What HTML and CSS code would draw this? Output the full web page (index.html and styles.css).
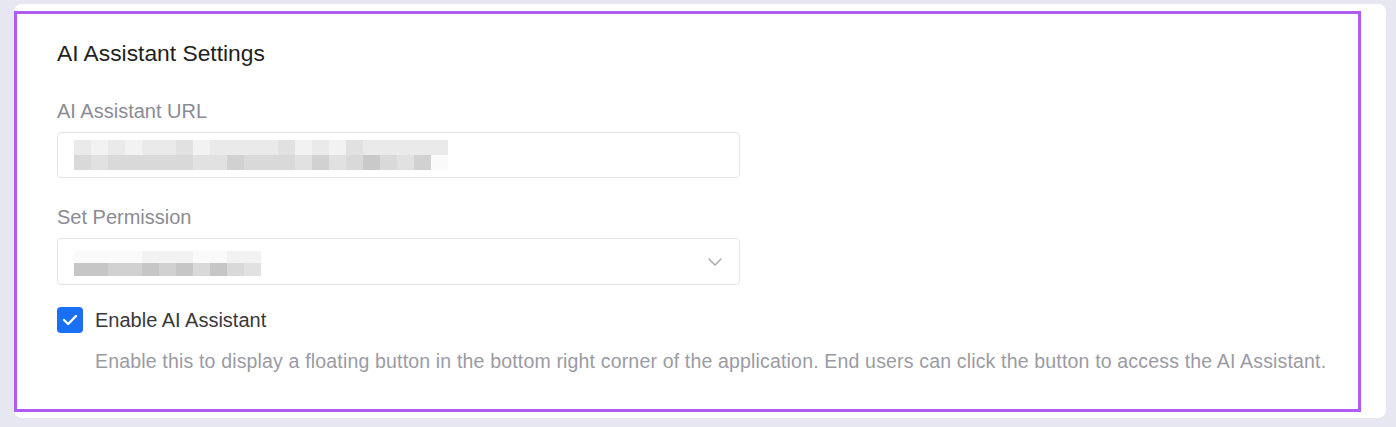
FILE: index.html
```html
<!DOCTYPE html>
<html lang="en">
<head>
<meta charset="utf-8">
<title>AI Assistant Settings</title>
<link rel="stylesheet" href="styles.css">
</head>
<body>
<div class="card">
  <section class="section">
    <h2 class="title">AI Assistant Settings</h2>

    <div class="field">
      <label class="label">AI Assistant URL</label>
      <div class="input">
        <div class="mosaic">
          <div class="row">
            <i class="b"></i><i class="a"></i><i class="b"></i><i class="a"></i><i class="b"></i><i class="b"></i><i class="c"></i><i class="a"></i><i class="b"></i><i class="b"></i><i class="b"></i><i class="b"></i><i class="c"></i><i class="a"></i><i class="b"></i><i class="a"></i><i class="c"></i><i class="b"></i><i class="b"></i><i class="b"></i><i class="b"></i><i class="b"></i>
          </div>
          <div class="row">
            <i class="d"></i><i class="c"></i><i class="d"></i><i class="d"></i><i class="d"></i><i class="d"></i><i class="d"></i><i class="c"></i><i class="c"></i><i class="e"></i><i class="d"></i><i class="d"></i><i class="d"></i><i class="c"></i><i class="e"></i><i class="c"></i><i class="d"></i><i class="f"></i><i class="d"></i><i class="c"></i><i class="e"></i><i class="w"></i>
          </div>
        </div>
      </div>
    </div>

    <div class="field">
      <label class="label">Set Permission</label>
      <div class="input select">
        <div class="mosaic sel">
          <div class="row">
            <i class="w"></i><i class="w"></i><i class="w"></i><i class="w"></i><i class="a"></i><i class="a"></i><i class="a"></i><i class="w"></i><i class="w"></i><i class="a"></i><i class="a"></i>
          </div>
          <div class="row">
            <i class="g"></i><i class="g"></i><i class="e"></i><i class="e"></i><i class="g"></i><i class="e"></i><i class="g"></i><i class="d"></i><i class="g"></i><i class="d"></i><i class="c"></i>
          </div>
        </div>
        <svg class="chevron" width="14" height="8" viewBox="0 0 14 8" aria-hidden="true">
          <polyline points="1,1 7,7 13,1" fill="none" stroke="#a3a3b3" stroke-width="1.4" stroke-linecap="round" stroke-linejoin="round"/>
        </svg>
      </div>
    </div>

    <div class="check-row">
      <span class="checkbox">
        <svg width="16" height="12" viewBox="0 0 16 12" aria-hidden="true">
          <polyline points="2,6 6.2,10 14,2" fill="none" stroke="#fff" stroke-width="2.4" stroke-linecap="round" stroke-linejoin="round"/>
        </svg>
      </span>
      <span class="check-label">Enable AI Assistant</span>
    </div>
    <p class="desc">Enable this to display a floating button in the bottom right corner of the application. End users can click the button to access the AI Assistant.</p>
  </section>
</div>
</body>
</html>
```

FILE: styles.css
```css
html, body {
  margin: 0;
  padding: 0;
}
body {
  background: #e7e7f1;
  font-family: "Liberation Sans", Arial, sans-serif;
  width: 1396px;
  height: 427px;
  overflow: hidden;
}
.card {
  margin: 4px 10px 0 14px;
  height: 414px;
  box-sizing: border-box;
  background: #fff;
  border-radius: 8px;
  padding: 7px 25px 6px 0;
}
.section {
  box-sizing: border-box;
  height: 401px;
  border: 3px solid #ae5cf1;
  padding: 24px 0 0 40px;
}
.title {
  margin: 0;
  font-size: 22.8px;
  line-height: 30px;
  font-weight: normal;
  color: #1f1f22;
}
.field {
  display: flex;
  flex-direction: column;
  width: 683px;
}
.field:first-of-type {
  margin-top: 29px;
}
.field + .field {
  margin-top: 25px;
}
.label {
  font-size: 20px;
  line-height: 28px;
  color: #8b8b94;
  margin-bottom: 7px;
}
.input {
  box-sizing: border-box;
  height: 46px;
  border: 1px solid #e4e4ec;
  border-radius: 4px;
  display: flex;
  align-items: center;
  padding-left: 16px;
}
.select {
  height: 47px;
  padding-right: 17px;
  justify-content: space-between;
}
.mosaic {
  display: flex;
  flex-direction: column;
  filter: blur(0.4px);
}
.mosaic.sel {
  margin-top: 3px;
}
.row {
  display: flex;
}
.row i {
  display: block;
  width: 17px;
  height: 15px;
}
.sel .row i {
  height: 12px;
}
.sel .row + .row i {
  height: 13px;
}
.row .w { background: #fafafb; }
.row .a { background: #f2f2f2; }
.row .b { background: #eaeaea; }
.row .c { background: #e1e1e2; }
.row .d { background: #d9d9da; }
.row .e { background: #d1d1d2; }
.row .f { background: #c9c9ca; }
.row .g { background: #c6c6c7; }
.chevron {
  display: block;
}
.check-row {
  display: flex;
  align-items: center;
  gap: 12px;
  margin-top: 21px;
}
.checkbox {
  box-sizing: border-box;
  width: 26px;
  height: 26px;
  border-radius: 4px;
  background: #1a6ff5;
  display: flex;
  align-items: center;
  justify-content: center;
}
.checkbox svg {
  display: block;
}
.check-label {
  font-size: 20px;
  line-height: 28px;
  color: #38383c;
}
.desc {
  margin: 14px 0 0 38px;
  font-size: 19.5px;
  letter-spacing: 0.17px;
  line-height: 26px;
  color: #9b9ba3;
  white-space: nowrap;
}
```
